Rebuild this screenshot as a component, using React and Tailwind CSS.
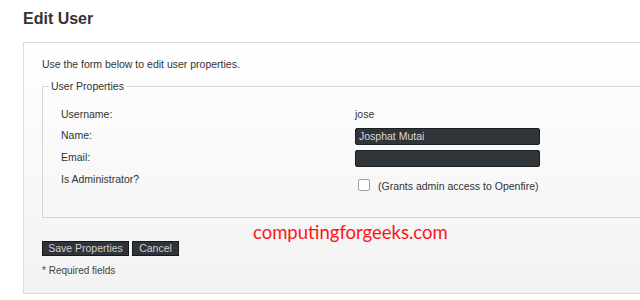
import React from 'react'

const rows = [
  { label: 'Username:', kind: 'text', value: 'jose' },
  { label: 'Name:', kind: 'input', value: 'Josphat Mutai' },
  { label: 'Email:', kind: 'input', value: '' },
]

const EditUser = () => {
  return (
    <div className="relative w-[640px] h-[300px] overflow-hidden bg-white text-[#333] font-['Liberation_Sans',Arial,sans-serif]">
      <h1 className="pl-[23px] pt-[9px] h-[42px] text-[16px] leading-[20px] font-bold text-[#333]">
        Edit User
      </h1>

      <div className="ml-[23px] w-[660px] border border-[#dcdcdc] bg-linear-to-b from-white to-[#f2f2f2] pl-[18px] pt-[14px] pb-[16px]">
        <p className="text-[10.5px] leading-[14px] text-[#333]">
          Use the form below to edit user properties.
        </p>

        <fieldset className="mt-[8px] border border-[#d4d4d4] px-[18px] pt-[12px] pb-[26px]">
          <legend className="-ml-[12px] px-[2px] text-[10.5px] leading-[14px] text-[#333]">
            User Properties
          </legend>

          {rows.map((row) => (
            <div
              key={row.label}
              className={`grid grid-cols-[294px_1fr] items-center text-[10.5px] ${
                row.kind === 'text' ? 'h-[20px]' : 'h-[22px]'
              }`}
            >
              <span>{row.label}</span>
              {row.kind === 'text' ? (
                <span>{row.value}</span>
              ) : (
                <input
                  type="text"
                  defaultValue={row.value}
                  className="w-[185px] h-[17px] rounded-[2px] border border-[#1c1f22] bg-[#30353a] px-[3px] text-[10.5px] leading-[15px] text-[#d8d8d8] outline-none"
                />
              )}
            </div>
          ))}

          <div className="grid grid-cols-[294px_1fr] items-start text-[10.5px] h-[22px] pt-[3px]">
            <span className="leading-[14px]">Is Administrator?</span>
            <label className="flex items-center gap-[8px] pl-[3px] pt-[4px]">
              <input
                type="checkbox"
                className="appearance-none w-[12px] h-[12px] rounded-[2px] border border-[#a0a0a0] bg-white"
              />
              <span className="leading-[14px] pt-[3px]">(Grants admin access to Openfire)</span>
            </label>
          </div>
        </fieldset>

        <div className="flex gap-[3px] mt-[23px]">
          <button
            type="button"
            className="h-[15px] w-[87px] border border-[#16181a] bg-[#2f3439] text-[10.5px] leading-[13px] text-[#d0d0d0]"
          >
            Save Properties
          </button>
          <button
            type="button"
            className="h-[15px] w-[47px] border border-[#16181a] bg-[#2f3439] text-[10.5px] leading-[13px] text-[#d0d0d0]"
          >
            Cancel
          </button>
        </div>

        <p className="mt-[9px] text-[10px] leading-[12px] text-[#444]">* Required fields</p>
      </div>

      {/* watermark over the form */}
      <span className="absolute left-[253px] top-[220px] text-[18.5px] leading-[24px] text-[#ff1414] font-['Lato',sans-serif]">
        computingforgeeks.com
      </span>
    </div>
  )
}

export default EditUser
